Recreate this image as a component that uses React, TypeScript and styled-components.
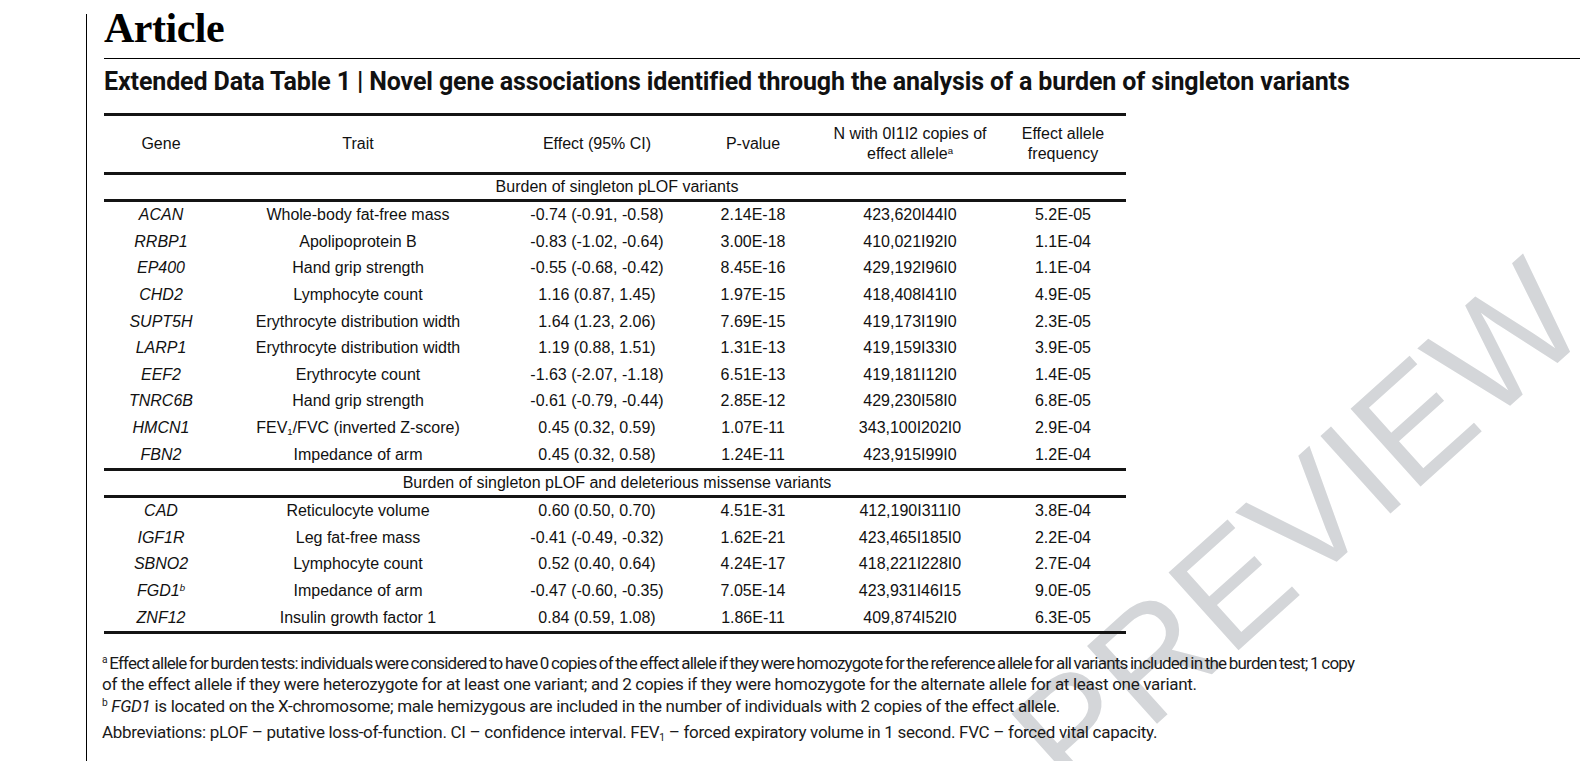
import React from 'react';
import styled, { createGlobalStyle } from 'styled-components';

const GlobalStyle = createGlobalStyle`
  html, body { margin: 0; padding: 0; background: #ffffff; }
  body { overflow: hidden; }
`;

const Page = styled.div`
  position: relative;
  width: 1580px;
  height: 761px;
  overflow: hidden;
  background: #ffffff;
`;

const Sheet = styled.main`
  position: relative;
  z-index: 1;
  display: flow-root;
  margin-left: 86px;
  margin-top: 14px;
  min-height: 747px;
  border-left: 1px solid #000;
  padding-left: 17px;
`;

const Kicker = styled.h1`
  margin: -7px 0 0 0;
  font-family: "Liberation Serif", "Times New Roman", serif;
  font-weight: 700;
  font-size: 42px;
  line-height: 42px;
  color: #000;
  letter-spacing: -0.5px;
`;

const TopRule = styled.hr`
  margin: 9px 0 0 0;
  border: 0;
  border-top: 1px solid #000;
  height: 0;
`;

const Caption = styled.h2`
  margin: 9px 0 0 0;
  font-family: Roboto, "Liberation Sans", sans-serif;
  font-weight: 700;
  font-size: 25px;
  line-height: 28px;
  color: #111;
  letter-spacing: -0.12px;
  white-space: nowrap;
`;

const Table = styled.div`
  margin-top: 17px;
  width: 1022px;
  border-top: 3px solid #141414;
  border-bottom: 3px solid #141414;
  font-family: "Liberation Sans", Arial, sans-serif;
  font-size: 16px;
  color: #111;
`;

const Grid = styled.div<{ $h: number }>`
  display: grid;
  grid-template-columns: 114px 280px 198px 114px 200px 116px;
  align-items: center;
  height: ${(p) => p.$h}px;
`;

const HeadRow = styled(Grid)`
  border-bottom: 3px solid #141414;
  line-height: 20px;
`;

const Cell = styled.div<{ $italic?: boolean; $last?: boolean }>`
  text-align: center;
  white-space: nowrap;
  font-style: ${(p) => (p.$italic ? 'italic' : 'normal')};
  padding-right: ${(p) => (p.$last ? '10px' : '0')};
`;

const Section = styled.div<{ $top?: boolean }>`
  height: 24px;
  line-height: 24px;
  text-align: center;
  padding-left: 4px;
  border-bottom: 3px solid #141414;
  border-top: ${(p) => (p.$top ? '3px solid #141414' : '0')};
  white-space: nowrap;
`;

const Sup = styled.sup`
  font-size: 0.6em;
  line-height: 0;
  vertical-align: 0.55em;
`;

const Sub = styled.sub`
  font-size: 0.6em;
  line-height: 0;
  vertical-align: -0.25em;
`;

const Notes = styled.div`
  margin-top: 19px;
  margin-left: -2px;
  font-family: Roboto, "Liberation Sans", sans-serif;
  font-size: 17px;
  line-height: 21.5px;
  color: #1a1a1a;
  white-space: nowrap;
`;

const Note = styled.div<{ $gap?: number }>`
  margin: ${(p) => p.$gap ?? 0}px 0 0 0;
`;

const NoteLine = styled.div<{ $tight?: boolean }>`
  letter-spacing: ${(p) => (p.$tight ? '-0.78px' : '-0.3px')};
  word-spacing: ${(p) => (p.$tight ? '-1px' : '0')};
`;

const Watermark = styled.div`
  position: absolute;
  z-index: 0;
  left: 986px;
  top: 704px;
  transform: rotate(-42deg);
  transform-origin: 0 0;
  font-family: "Liberation Sans", Arial, sans-serif;
  font-size: 152px;
  line-height: 1;
  color: #d4d6d9;
  white-space: nowrap;
  pointer-events: none;
`;

type Row = [React.ReactNode, React.ReactNode, string, string, string, string];

const section1: Row[] = [
  ['ACAN', 'Whole-body fat-free mass', '-0.74 (-0.91, -0.58)', '2.14E-18', '423,620I44I0', '5.2E-05'],
  ['RRBP1', 'Apolipoprotein B', '-0.83 (-1.02, -0.64)', '3.00E-18', '410,021I92I0', '1.1E-04'],
  ['EP400', 'Hand grip strength', '-0.55 (-0.68, -0.42)', '8.45E-16', '429,192I96I0', '1.1E-04'],
  ['CHD2', 'Lymphocyte count', '1.16 (0.87, 1.45)', '1.97E-15', '418,408I41I0', '4.9E-05'],
  ['SUPT5H', 'Erythrocyte distribution width', '1.64 (1.23, 2.06)', '7.69E-15', '419,173I19I0', '2.3E-05'],
  ['LARP1', 'Erythrocyte distribution width', '1.19 (0.88, 1.51)', '1.31E-13', '419,159I33I0', '3.9E-05'],
  ['EEF2', 'Erythrocyte count', '-1.63 (-2.07, -1.18)', '6.51E-13', '419,181I12I0', '1.4E-05'],
  ['TNRC6B', 'Hand grip strength', '-0.61 (-0.79, -0.44)', '2.85E-12', '429,230I58I0', '6.8E-05'],
  [
    'HMCN1',
    <>
      FEV<Sub>1</Sub>/FVC (inverted Z-score)
    </>,
    '0.45 (0.32, 0.59)',
    '1.07E-11',
    '343,100I202I0',
    '2.9E-04',
  ],
  ['FBN2', 'Impedance of arm', '0.45 (0.32, 0.58)', '1.24E-11', '423,915I99I0', '1.2E-04'],
];

const section2: Row[] = [
  ['CAD', 'Reticulocyte volume', '0.60 (0.50, 0.70)', '4.51E-31', '412,190I311I0', '3.8E-04'],
  ['IGF1R', 'Leg fat-free mass', '-0.41 (-0.49, -0.32)', '1.62E-21', '423,465I185I0', '2.2E-04'],
  ['SBNO2', 'Lymphocyte count', '0.52 (0.40, 0.64)', '4.24E-17', '418,221I228I0', '2.7E-04'],
  [
    <>
      FGD1<Sup>b</Sup>
    </>,
    'Impedance of arm',
    '-0.47 (-0.60, -0.35)',
    '7.05E-14',
    '423,931I46I15',
    '9.0E-05',
  ],
  ['ZNF12', 'Insulin growth factor 1', '0.84 (0.59, 1.08)', '1.86E-11', '409,874I52I0', '6.3E-05'],
];

const DataRow: React.FC<{ row: Row }> = ({ row }) => (
  <Grid $h={26.6}>
    <Cell $italic>{row[0]}</Cell>
    <Cell>{row[1]}</Cell>
    <Cell>{row[2]}</Cell>
    <Cell>{row[3]}</Cell>
    <Cell>{row[4]}</Cell>
    <Cell $last>{row[5]}</Cell>
  </Grid>
);

export default function App() {
  return (
    <Page>
      <GlobalStyle />
      <Watermark aria-hidden>PREVIEW</Watermark>
      <Sheet>
        <Kicker>Article</Kicker>
        <TopRule />
        <Caption>
          Extended Data Table 1 | Novel gene associations identified through the analysis of a burden of singleton variants
        </Caption>
        <Table>
          <HeadRow $h={56}>
            <Cell>Gene</Cell>
            <Cell>Trait</Cell>
            <Cell>Effect (95% CI)</Cell>
            <Cell>P-value</Cell>
            <Cell>
              N with 0I1I2 copies of
              <br />
              effect allele<Sup>a</Sup>
            </Cell>
            <Cell $last>
              Effect allele
              <br />
              frequency
            </Cell>
          </HeadRow>
          <Section>Burden of singleton pLOF variants</Section>
          {section1.map((r, i) => (
            <DataRow key={`a${i}`} row={r} />
          ))}
          <Section $top>Burden of singleton pLOF and deleterious missense variants</Section>
          {section2.map((r, i) => (
            <DataRow key={`b${i}`} row={r} />
          ))}
        </Table>
        <Notes>
          <Note>
            <NoteLine $tight>
              <Sup>a</Sup> Effect allele for burden tests: individuals were considered to have 0 copies of the effect allele if they were homozygote for the reference allele for all variants included in the burden test; 1 copy
            </NoteLine>
            <NoteLine>
              of the effect allele if they were heterozygote for at least one variant; and 2 copies if they were homozygote for the alternate allele for at least one variant.
            </NoteLine>
          </Note>
          <Note>
            <NoteLine>
              <Sup>b</Sup> <i>FGD1</i> is located on the X-chromosome; male hemizygous are included in the number of individuals with 2 copies of the effect allele.
            </NoteLine>
          </Note>
          <Note $gap={5}>
            <NoteLine>
              Abbreviations: pLOF – putative loss-of-function. CI – confidence interval. FEV<Sub>1</Sub> – forced expiratory volume in 1 second. FVC – forced vital capacity.
            </NoteLine>
          </Note>
        </Notes>
      </Sheet>
    </Page>
  );
}
